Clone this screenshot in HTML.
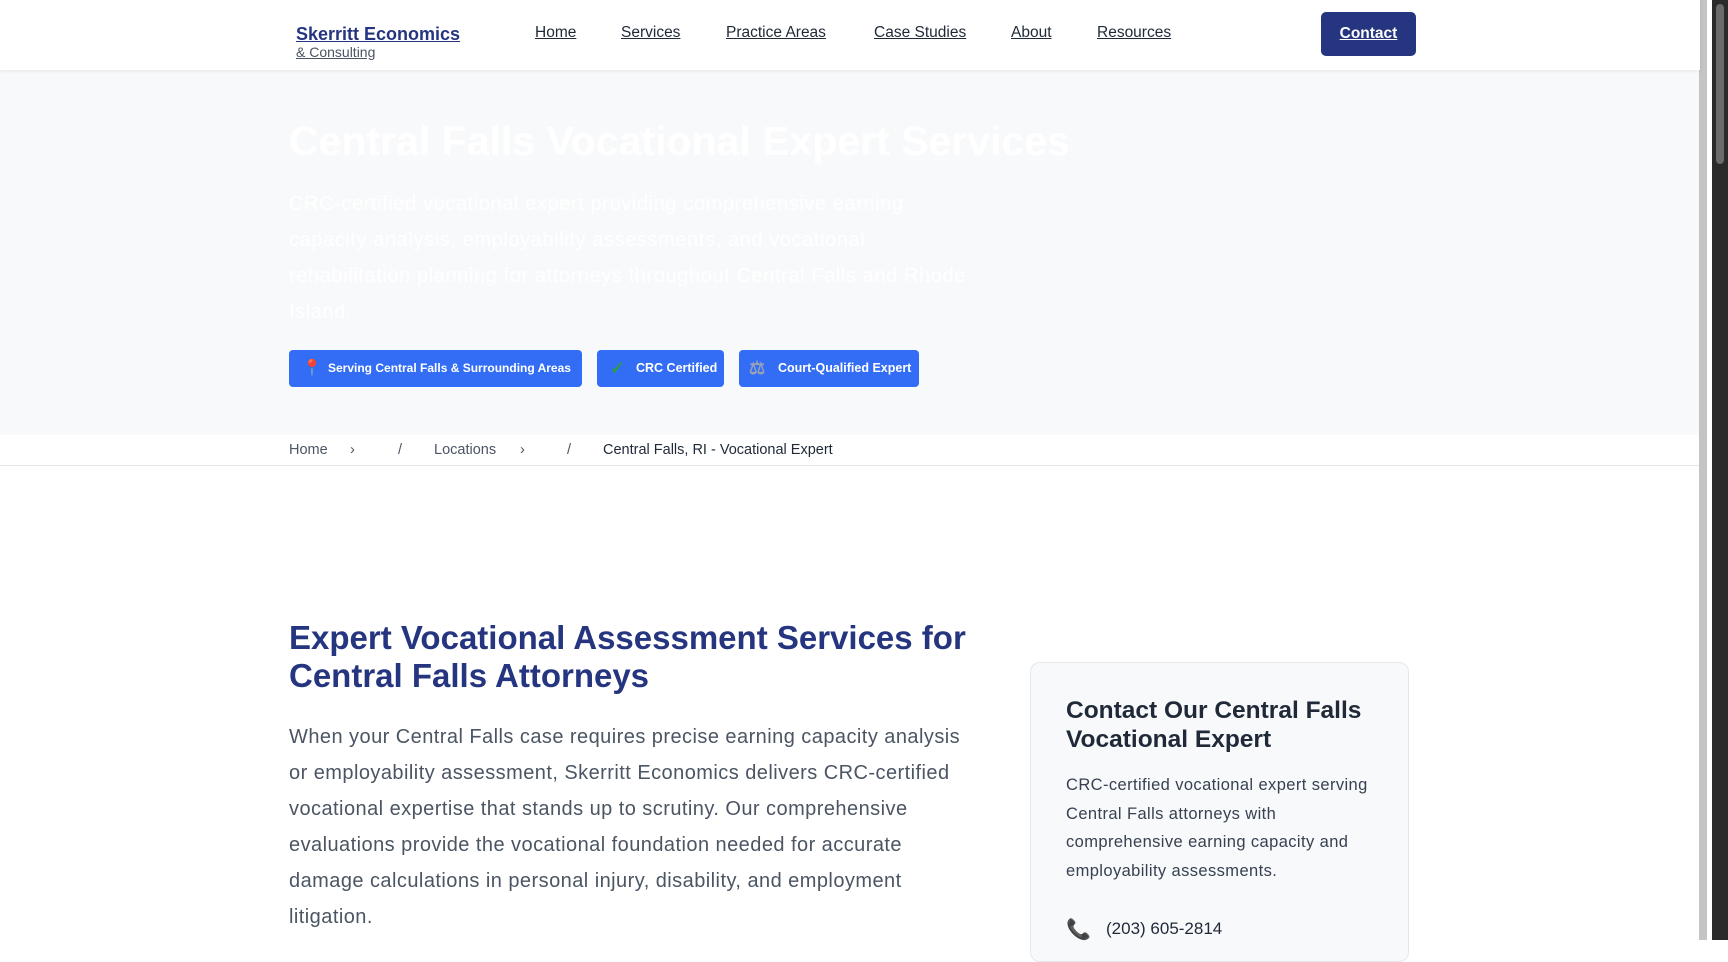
<!DOCTYPE html>
<html><head><meta charset="utf-8"><style>
*{margin:0;padding:0;box-sizing:border-box}
body{width:1728px;height:940px;overflow:hidden;background:#fff;font-family:"Liberation Sans",sans-serif;position:relative;color:#1f2937}
.hdr{position:absolute;left:0;top:0;width:1700px;height:70px;background:#fff;box-shadow:0 1px 4px rgba(0,0,0,.08);z-index:2}
.logo{position:absolute;left:296px;top:24px;color:#253580;font-weight:bold;font-size:18px;text-decoration:underline}
.logo2{position:absolute;left:296px;top:44px;color:#4b5563;font-size:14px;text-decoration:underline}
.nav a{position:absolute;top:24px;font-size:15.5px;color:#1f2937;text-decoration:underline}
.cbtn{position:absolute;left:1321px;top:12px;width:95px;height:44px;background:#253580;border-radius:5px;color:#fff;font-size:15.5px;font-weight:bold;text-decoration:underline;text-align:center;line-height:44px}
.hero{position:absolute;left:0;top:70px;width:1700px;height:365px;background:#f8f9fb}
.h1{position:absolute;left:289px;top:118px;font-size:41px;font-weight:bold;color:#fff}
.hp{position:absolute;left:289px;top:186px;width:690px;font-size:20px;line-height:36px;color:#fff;letter-spacing:0.6px}
.badge{position:absolute;top:350px;height:37px;background:#336df5;border-radius:4px;color:#fff;font-weight:bold;font-size:12.5px;line-height:37px;padding-left:39px;white-space:nowrap;overflow:hidden}
.bc{position:absolute;left:0;top:435px;width:1700px;height:31px;border-bottom:1px solid #e5e7eb;font-size:14.5px;color:#4b5563}
.bc span{position:absolute;top:7px}
.h2{position:absolute;left:289px;top:619px;font-size:33px;line-height:38px;font-weight:bold;color:#253580;width:700px}
.p{position:absolute;left:289px;top:719px;width:690px;font-size:20px;line-height:36px;color:#4b5563;letter-spacing:0.45px}
.card{position:absolute;left:1030px;top:662px;width:379px;height:300px;background:#f8f9fb;border:1px solid #e5e7eb;border-radius:10px}
.card h3{position:absolute;left:35px;top:33px;font-size:24.5px;line-height:29px;color:#1f2937;width:320px}
.card p{position:absolute;left:35px;top:108px;width:310px;font-size:16.5px;line-height:28.5px;color:#374151;letter-spacing:0.4px}
.ph{position:absolute;left:75px;top:256px;font-size:17px;color:#1f2937}
.sb1{position:absolute;left:1699px;top:0;width:8px;height:940px;background:#c4c4c4}
.sb2{position:absolute;left:1712px;top:0;width:16px;height:940px;background:#2b2b2b}
.sb3{position:absolute;left:1716px;top:4px;width:8px;height:160px;background:#6b6b6b;border-radius:4px}
</style></head><body>
<div class="hdr">
<div class="logo">Skerritt Economics</div>
<div class="logo2">&amp; Consulting</div>
<div class="nav"><a style="left:535px">Home</a><a style="left:621px">Services</a><a style="left:726px">Practice Areas</a><a style="left:874px">Case Studies</a><a style="left:1011px">About</a><a style="left:1097px">Resources</a></div>
<div class="cbtn">Contact</div>
</div>
<div class="hero">
</div>
<div class="h1">Central Falls Vocational Expert Services</div>
<div class="hp">CRC-certified vocational expert providing comprehensive earning capacity analysis, employability assessments, and vocational rehabilitation planning for attorneys throughout Central Falls and Rhode Island.</div>
<div class="badge" style="left:289px;width:293px;font-size:12px"><span style="position:absolute;left:13px;top:0;color:#e53935;font-size:16px">📍</span>Serving Central Falls &amp; Surrounding Areas</div>
<div class="badge" style="left:597px;width:127px"><span style="position:absolute;left:13px;top:0;color:#2e9b4a;font-size:18px">✓</span>CRC Certified</div>
<div class="badge" style="left:739px;width:180px"><span style="position:absolute;left:10px;top:0;color:#9aa3b5;font-size:18px">⚖</span>Court-Qualified Expert</div>
<div class="bc"><span style="left:289px">Home</span><span style="left:350px">›</span><span style="left:398px">/</span><span style="left:434px">Locations</span><span style="left:520px">›</span><span style="left:567px">/</span><span style="left:603px;color:#1f2937">Central Falls, RI - Vocational Expert</span></div>
<div class="h2">Expert Vocational Assessment Services for Central Falls Attorneys</div>
<div class="p">When your Central Falls case requires precise earning capacity analysis or employability assessment, Skerritt Economics delivers CRC-certified vocational expertise that stands up to scrutiny. Our comprehensive evaluations provide the vocational foundation needed for accurate damage calculations in personal injury, disability, and employment litigation.</div>
<div class="card">
<h3>Contact Our Central Falls Vocational Expert</h3>
<p>CRC-certified vocational expert serving Central Falls attorneys with comprehensive earning capacity and employability assessments.</p>
<div style="position:absolute;left:35px;top:254px;font-size:20px;color:#374151">📞</div>
<div class="ph">(203) 605-2814</div>
</div>
<div class="sb1"></div><div class="sb2"></div><div class="sb3"></div>
</body></html>
